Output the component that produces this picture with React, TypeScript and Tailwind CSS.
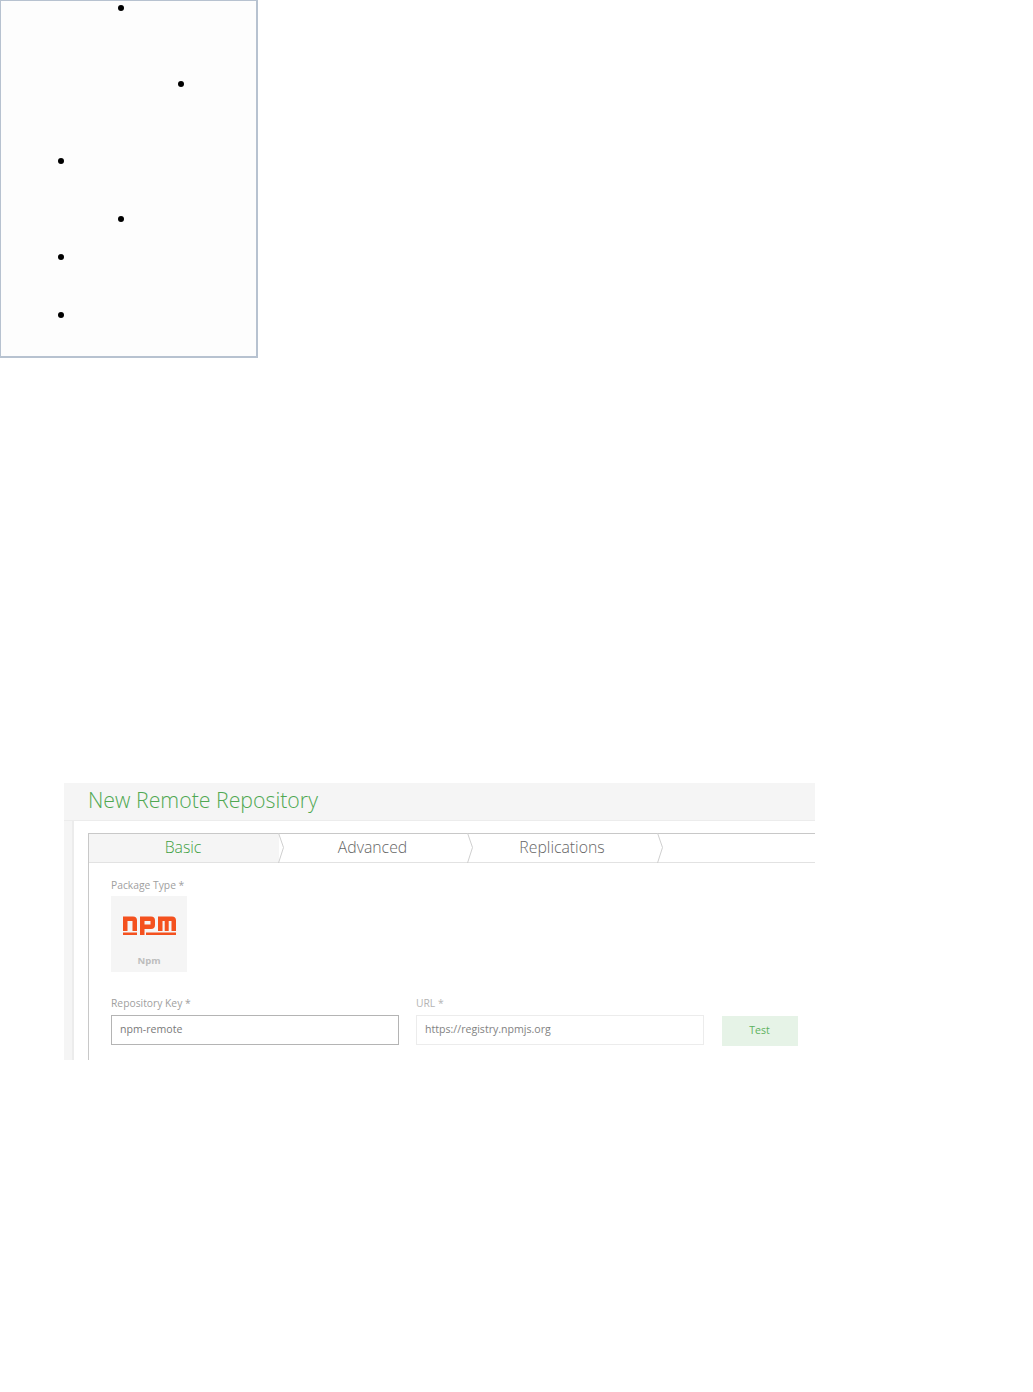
const dots = [
  { indent: 117, gap: 4 },
  { indent: 177, gap: 70.4 },
  { indent: 57, gap: 70.6 },
  { indent: 117, gap: 52 },
  { indent: 57, gap: 32 },
  { indent: 57, gap: 52 },
];

const tabs = ["Basic", "Advanced", "Replications"];

function Chevron() {
  return (
    <svg className="absolute right-[-5px] top-[-1px]" width="6" height="30" viewBox="0 0 6 30" fill="none">
      <path d="M0.5 0 L5.5 14.5 L0.5 30" stroke="#cfcfcf" strokeWidth="1" />
    </svg>
  );
}

function NpmLogo() {
  return (
    <svg width="53" height="19" viewBox="0 0 53 19" fill="#f4511e">
      <path d="M0 0.500h10a4 4 0 0 1 4 4V15h-4.500V5H4.500v10H0z" />
      <path
        fillRule="evenodd"
        d="M17 0.500h11a4 4 0 0 1 4 4V9a4 4 0 0 1-4 4h-6.500v6H17zM21.500 5v3.500h6V5z"
      />
      <path d="M35 0.500h14a4 4 0 0 1 4 4V15h-4.500V5h-2.800v10h-4V5h-2.200v10H35z" />
      <rect x="0" y="16.500" width="14" height="2.500" />
      <rect x="23" y="16.500" width="30" height="2.500" />
    </svg>
  );
}

export default function App() {
  return (
    <div className="min-h-[1392px] bg-white font-['Open_Sans',sans-serif]">
      <div className="w-[258px] h-[358px] bg-[#fdfdfd] border border-b-2 border-r-2 border-[#b7c2d0]">
        {dots.map((d, i) => (
          <div
            key={i}
            className="w-[6px] h-[6px] rounded-full bg-black"
            style={{ marginLeft: d.indent, marginTop: d.gap }}
          />
        ))}
      </div>

      <div className="mt-[425px] ml-[64px] w-[751px] h-[277px] overflow-hidden bg-[#f5f5f5]">
        <div className="h-[38px] pl-[24px] pb-[4px] flex items-center border-b border-[#ececec]">
          <h1 className="text-[21.300px] font-light leading-none text-[#4fa851]">New Remote Repository</h1>
        </div>
        <div className="ml-[8px] h-[239px] bg-white border-l-2 border-[#ececec] pl-[14px] pt-[12px]">
          <div className="h-full border-l border-t border-[#c8c8c8]">
            <div className="flex h-[29px] border-b border-[#e2e2e2]">
              {tabs.map((t, i) => (
                <div
                  key={t}
                  className={`relative w-[189.500px] flex items-center justify-center pr-[1.500px] text-[15.800px] font-light ${
                    i === 0 ? "bg-[#f5f5f5] text-[#3f9f42]" : "text-[#666666]"
                  }`}
                >
                  {t}
                  <Chevron />
                </div>
              ))}
            </div>

            <div className="pl-[22px] pt-[15px]">
              <label className="block text-[10.300px] leading-[14px] text-[#a0a0a0]">Package Type *</label>
              <div className="mt-[4px] w-[76px] h-[76px] bg-[#f5f5f5] flex flex-col items-center pt-[20px]">
                <NpmLogo />
                <span className="mt-[19px] text-[9.500px] leading-[13px] font-bold text-[#bdbdbd]">Npm</span>
              </div>

              <div className="mt-[24px] flex items-end">
                <div className="w-[288px]">
                  <label className="block text-[10.300px] leading-[14px] text-[#a0a0a0]">Repository Key *</label>
                  <div className="mt-[5px] h-[30px] border border-[#b4b4b4] pl-[8px] flex items-center text-[10.600px] text-[#7a7a7a]">
                    npm-remote
                  </div>
                </div>
                <div className="ml-[17px] w-[288px]">
                  <label className="block text-[10.300px] leading-[14px] text-[#b4b4b4]">URL *</label>
                  <div className="mt-[5px] h-[30px] border border-[#ececec] pl-[8px] flex items-center text-[10.600px] text-[#828282]">
                    https://registry.npmjs.org
                  </div>
                </div>
                <button className="ml-[18px] mb-[-1px] w-[76px] h-[30px] pr-[1px] bg-[#e6f3e7] text-[10.500px] text-[#5cb25d]">
                  Test
                </button>
              </div>
            </div>
          </div>
        </div>
      </div>
    </div>
  );
}
